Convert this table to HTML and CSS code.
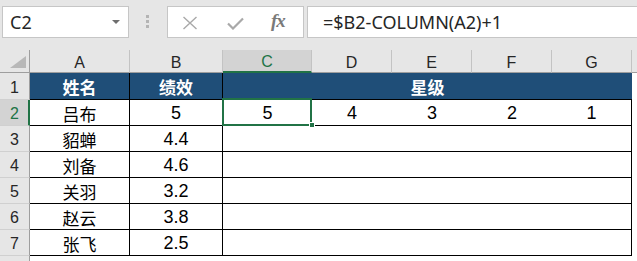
FILE: index.html
```html
<!DOCTYPE html>
<html lang="zh">
<head>
<meta charset="utf-8">
<title>Excel</title>
<link rel="stylesheet" href="styles.css">
</head>
<body>
<div class="toolbar">
  <div class="namebox"><span class="nb-text">C2</span><span class="nb-arrow"></span></div>
  <div class="dots"><i></i><i></i><i></i></div>
  <div class="fxbox">
    <svg class="ic-x" width="16" height="14" viewBox="0 0 16 14"><path d="M1.5 1 L14.5 13 M14.5 1 L1.5 13" stroke="#a9a9a9" stroke-width="1.4" fill="none"/></svg>
    <svg class="ic-ok" width="17" height="13" viewBox="0 0 17 13"><path d="M1 6.5 L6 11.5 L16 1.5" stroke="#a9a9a9" stroke-width="2.2" fill="none"/></svg>
    <span class="ic-fx">fx</span>
  </div>
  <div class="formula">=$B2-COLUMN(A2)+1</div>
</div>
<div class="sheet">
  <div class="corner"><svg width="16" height="12" viewBox="0 0 16 12"><path d="M16 0 L16 12 L0 12 Z" fill="#b8b8b8"/></svg></div>
  <div class="ch">A</div><div class="ch">B</div><div class="ch ch-sel">C</div><div class="ch">D</div><div class="ch">E</div><div class="ch">F</div><div class="ch">G</div><div class="ch-end"></div>

  <div class="rh">1</div>
  <div class="c hd br"><span class="zh">姓名</span></div>
  <div class="c hd br"><span class="zh">绩效</span></div>
  <div class="c hd merged"><span class="zh">星级</span></div>
  <div class="ex"></div>

  <div class="rh rh-sel">2</div>
  <div class="c br"><span class="zh">吕布</span></div>
  <div class="c br">5</div>
  <div class="c sel">5<span class="sel-box"></span><span class="sel-handle"></span></div>
  <div class="c">4</div><div class="c">3</div><div class="c">2</div><div class="c br">1</div>
  <div class="ex"></div>

  <div class="rh">3</div>
  <div class="c br"><span class="zh">貂蝉</span></div>
  <div class="c br">4.4</div>
  <div class="c"></div><div class="c"></div><div class="c"></div><div class="c"></div><div class="c br"></div>
  <div class="ex"></div>

  <div class="rh">4</div>
  <div class="c br"><span class="zh">刘备</span></div>
  <div class="c br">4.6</div>
  <div class="c"></div><div class="c"></div><div class="c"></div><div class="c"></div><div class="c br"></div>
  <div class="ex"></div>

  <div class="rh">5</div>
  <div class="c br"><span class="zh">关羽</span></div>
  <div class="c br">3.2</div>
  <div class="c"></div><div class="c"></div><div class="c"></div><div class="c"></div><div class="c br"></div>
  <div class="ex"></div>

  <div class="rh">6</div>
  <div class="c br"><span class="zh">赵云</span></div>
  <div class="c br">3.8</div>
  <div class="c"></div><div class="c"></div><div class="c"></div><div class="c"></div><div class="c br"></div>
  <div class="ex"></div>

  <div class="rh">7</div>
  <div class="c br"><span class="zh">张飞</span></div>
  <div class="c br">2.5</div>
  <div class="c"></div><div class="c"></div><div class="c"></div><div class="c"></div><div class="c br"></div>
  <div class="ex"></div>

  <div class="rh rh-last"></div>
  <div class="tail"></div>
</div>
</body>
</html>
```
FILE: styles.css
```css
* { box-sizing: border-box; }
html, body { margin: 0; padding: 0; }
body {
  width: 637px;
  height: 261px;
  overflow: hidden;
  background: #ffffff;
  font-family: "Liberation Sans", "Noto Sans CJK SC", sans-serif;
}
.toolbar {
  height: 50px;
  background: #e6e6e6;
  display: flex;
  align-items: flex-start;
  padding-top: 6px;
}
.namebox {
  margin-left: 2px;
  width: 127px;
  height: 32px;
  background: #fff;
  border: 1px solid #c6c6c6;
  display: flex;
  align-items: center;
  padding-left: 7px;
  padding-right: 7px;
  font-family: "Noto Sans", sans-serif;
  font-size: 18px;
  color: #262626;
}
.nb-text { flex: 1; }
.nb-arrow {
  width: 0; height: 0;
  border-left: 4px solid transparent;
  border-right: 4px solid transparent;
  border-top: 4px solid #6e6e6e;
  margin-right: 1px;
}
.dots {
  width: 38px;
  display: flex;
  flex-direction: column;
  gap: 2px;
  padding-left: 17px;
  padding-top: 9px;
}
.dots i { display: block; width: 3px; height: 3px; background: #b4b4b4; }
.fxbox {
  width: 137px;
  height: 32px;
  background: #fff;
  border: 1px solid #c6c6c6;
  display: flex;
  align-items: center;
  padding-left: 14px;
}
.ic-x { margin-top: 1px; }
.ic-ok { margin-left: 29px; margin-top: 2px; }
.ic-fx {
  margin-left: 27px;
  font-family: "Liberation Serif", serif;
  font-style: italic;
  font-weight: bold;
  font-size: 19px;
  color: #7a7a7a;
  letter-spacing: -1px;
  margin-top: -2px;
}
.formula {
  flex: 1;
  margin-left: 3px;
  height: 32px;
  background: #fff;
  border: 1px solid #c6c6c6;
  border-right: none;
  display: flex;
  align-items: center;
  padding-left: 15px;
  font-family: "Noto Sans", sans-serif;
  font-size: 18px;
  color: #262626;
}
.sheet {
  display: grid;
  grid-template-columns: 30px 100px 93px 89px 80px 80px 80px 80px 5px;
  grid-template-rows: 23px 27px 26px 26px 26px 26px 26px 26px 6px;
  background: #fff;
}
.corner {
  background: #e6e6e6;
  border-right: 1px solid #9e9e9e;
  border-bottom: 1px solid #9e9e9e;
  display: flex;
  justify-content: flex-end;
  align-items: flex-end;
  padding: 0 3px 4px 0;
}
.corner svg { display: block; }
.ch {
  background: #e6e6e6;
  border-right: 1px solid #c3c3c3;
  border-bottom: 1px solid #9e9e9e;
  display: flex;
  align-items: center;
  justify-content: center;
  font-size: 16px;
  color: #262626;
  padding-top: 3px;
}
.ch-sel {
  background: #d3d3d3;
  color: #217346;
  border-bottom: 2px solid #217346;
}
.ch-end { background: #e6e6e6; border-bottom: 1px solid #9e9e9e; }
.rh {
  background: #e6e6e6;
  border-right: 1px solid #9e9e9e;
  border-bottom: 1px solid #d0d0d0;
  display: flex;
  align-items: center;
  justify-content: center;
  font-size: 16px;
  color: #262626;
  padding-top: 3px;
}
.rh-sel {
  background: #d3d3d3;
  color: #217346;
  border-right: 2px solid #217346;
  padding-left: 1px;
}
.rh-last { border-bottom: none; }
.tail { grid-column: 2 / 10; background: #fff; }
.c {
  border-bottom: 1px solid #000;
  display: flex;
  align-items: center;
  justify-content: center;
  font-size: 18px;
  color: #000;
  padding-top: 1px;
}
.br { border-right: 1px solid #000; }
.zh { font-size: 17px; font-family: "Noto Sans CJK SC", sans-serif; }
.hd {
  background: #1f4e78;
  color: #fff;
  font-weight: bold;
}
.merged { grid-column: 4 / 9; }
.ex { background: #fff; }
.sel { position: relative; }
.sel-box {
  position: absolute;
  left: -1px;
  top: -2px;
  width: 90px;
  height: 28px;
  border: 2px solid #217346;
}
.sel-handle {
  position: absolute;
  left: 86px;
  top: 22px;
  width: 6px;
  height: 6px;
  background: #217346;
  border: 1px solid #fff;
}
```
